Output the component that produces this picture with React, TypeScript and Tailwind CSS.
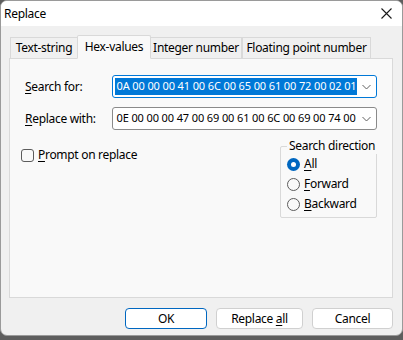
import React from 'react';

const font = { fontFamily: '"Noto Sans", "Open Sans", sans-serif' };

function U({ children }: { children: React.ReactNode }) {
  return <span className="underline underline-offset-[2px] decoration-[1px]">{children}</span>;
}

function Chevron() {
  return (
    <svg width="9" height="6" viewBox="0 0 9 6" className="shrink-0">
      <path d="M0.5 1 L4.5 5 L8.5 1" fill="none" stroke="#606060" strokeWidth="1" />
    </svg>
  );
}

function Combo({ value, focused }: { value: string; focused?: boolean }) {
  return (
    <div
      className={
        'flex items-center h-[23px] w-[266px] bg-white rounded-[3px] border pl-[2px] pr-[5px] ' +
        (focused ? 'border-[#0078d7]' : 'border-[#8a8a8a]')
      }
    >
      <div className="flex-1 overflow-hidden whitespace-nowrap text-[11px] tracking-[-0.12px]">
        <span
          className={
            focused ? 'bg-[#0078d7] text-white px-[1px] py-[2px]' : 'px-[1px] text-black'
          }
        >
          {value}
        </span>
      </div>
      <Chevron />
    </div>
  );
}

function Radio({ checked, children }: { checked?: boolean; children: React.ReactNode }) {
  return (
    <div className="flex items-center h-[20px] gap-[4px]">
      {checked ? (
        <div className="w-[13px] h-[13px] rounded-full bg-[#0067c0] flex items-center justify-center">
          <div className="w-[5px] h-[5px] rounded-full bg-white" />
        </div>
      ) : (
        <div className="w-[13px] h-[13px] rounded-full border border-[#5c5c5c] bg-[#f9f9f9]" />
      )}
      <span>{children}</span>
    </div>
  );
}

export default function App() {
  const tabs = [
    { label: 'Text-string', w: 'w-[68px]' },
    { label: 'Hex-values', w: 'w-[74px]' },
    { label: 'Integer number', w: 'w-[92px]' },
    { label: 'Floating point number', w: 'w-[129px]' },
  ];

  return (
    <div
      className="w-[403px] h-[340px] bg-[#5e5e5e] text-[12px] text-black whitespace-nowrap tracking-[-0.3px]"
      style={font}
    >
      <div className="w-[403px] h-[336px] flex flex-col rounded-[7px] overflow-hidden border border-[#9a9a9a] bg-[#f0f0f0]">
        {/* Title bar */}
        <div className="h-[25px] bg-white flex items-center justify-between pl-[3px] pr-[10px] shrink-0">
          <span className="text-[12px]">Replace</span>
          <svg width="11" height="11" viewBox="0 0 11 11">
            <path d="M0.5 0.5 L10.5 10.5 M10.5 0.5 L0.5 10.5" stroke="#1a1a1a" strokeWidth="1.1" />
          </svg>
        </div>

        <div className="flex-1 flex flex-col px-[8px] pt-[8px]">
          {/* Tabs */}
          <div className="flex items-end h-[24px] pl-[1px]">
            {tabs.map((t) =>
              t.label === 'Hex-values' ? (
                <div
                  key={t.label}
                  className={
                    t.w +
                    ' h-[24px] -mb-px -mx-px z-10 flex items-center justify-center bg-[#f9f9f9] border border-[#d9d9d9] border-b-[#f9f9f9] rounded-t-[2px]'
                  }
                >
                  {t.label}
                </div>
              ) : (
                <div
                  key={t.label}
                  className={
                    t.w +
                    ' h-[21px] flex items-center justify-center bg-[#f0f0f0] border border-[#d9d9d9] border-b-0'
                  }
                >
                  {t.label}
                </div>
              )
            )}
          </div>

          {/* Tab panel */}
          <div className="h-[240px] w-[384px] border border-[#d9d9d9] bg-[#f9f9f9] px-[15px] pt-[16px]">
            <div className="flex items-center h-[23px]">
              <span className="w-[88px]">
                <U>S</U>earch for:
              </span>
              <Combo value="0A 00 00 00 41 00 6C 00 65 00 61 00 72 00 02 01" focused />
            </div>
            <div className="flex items-center h-[23px] mt-[9px]">
              <span className="w-[88px]">
                <U>R</U>eplace with:
              </span>
              <Combo value="0E 00 00 00 47 00 69 00 61 00 6C 00 69 00 74 00" />
            </div>

            <div className="flex justify-between mt-[16px]">
              <div className="flex items-start gap-[4px] -ml-[4px]">
                <div className="w-[13px] h-[13px] mt-[3px] rounded-[3px] border border-[#5c5c5c] bg-[#f9f9f9]" />
                <span className="leading-[18px]">
                  <U>P</U>rompt on replace
                </span>
              </div>

              <div className="relative w-[97px] h-[72px] border border-[#d9d9d9] rounded-[2px] px-[6px] pt-[7px]">
                <span className="absolute -top-[9px] left-[6px] px-[2px] bg-[#f9f9f9] leading-[16px]">
                  Search direction
                </span>
                <Radio checked>
                  <U>A</U>ll
                </Radio>
                <Radio>
                  <U>F</U>orward
                </Radio>
                <Radio>
                  <U>B</U>ackward
                </Radio>
              </div>
            </div>
          </div>

          {/* Buttons */}
          <div className="flex justify-end gap-[9px] mt-[10px] pr-[1px]">
            <button className="w-[82px] h-[21px] bg-white border border-[#0067c0] rounded-[4px] flex items-center justify-center">
              OK
            </button>
            <button className="w-[87px] h-[21px] bg-white border border-[#d0d0d0] rounded-[4px] flex items-center justify-center">
              <span>
                Replace <U>a</U>ll
              </span>
            </button>
            <button className="w-[81px] h-[21px] bg-white border border-[#d0d0d0] rounded-[4px] flex items-center justify-center">
              Cancel
            </button>
          </div>
        </div>
      </div>
    </div>
  );
}
